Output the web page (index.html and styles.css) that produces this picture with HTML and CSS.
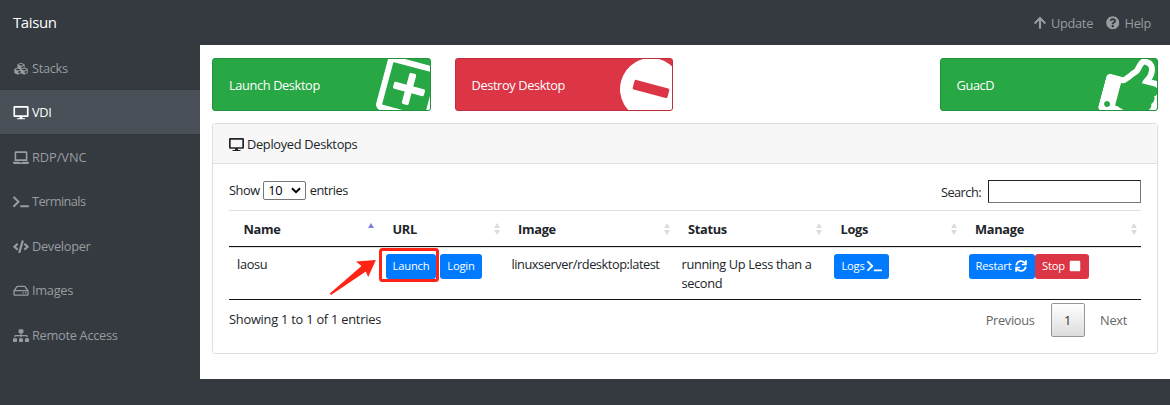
FILE: index.html
```html
<!DOCTYPE html>
<html lang="en">
<head>
<meta charset="utf-8">
<title>Taisun</title>
<link rel="stylesheet" href="styles.css">
</head>
<body>
<svg class="sprite" aria-hidden="true">
  <symbol id="cubes" viewBox="0 0 512 512"><path d="M488.6 250.2L392 214V105.5c0-15-9.3-28.4-23.4-33.7l-100-37.5c-8.1-3.1-17.1-3.1-25.3 0l-100 37.5c-14.1 5.3-23.4 18.7-23.4 33.7V214l-96.6 36.2C9.3 255.5 0 268.9 0 283.9V394c0 13.6 7.7 26.1 19.9 32.2l100 50c10.1 5.1 22.1 5.1 32.2 0l103.9-52 103.9 52c10.1 5.1 22.1 5.1 32.2 0l100-50c12.2-6.1 19.9-18.6 19.9-32.2V283.9c0-15-9.3-28.4-23.4-33.7zM358 214.8l-85 31.9v-68.2l85-37v73.3zM154 104.1l102-38.2 102 38.2v.6l-102 41.4-102-41.4v-.6zm84 291.1l-85 42.5v-79.1l85-38.8v75.4zm0-112l-102 41.4-102-41.4v-.6l102-38.2 102 38.2v.6zm240 112l-85 42.5v-79.1l85-38.8v75.4zm0-112l-102 41.4-102-41.4v-.6l102-38.2 102 38.2v.6z"/></symbol>
  <symbol id="desktop" viewBox="0 0 576 512"><path d="M528 0H48C21.5 0 0 21.5 0 48v320c0 26.5 21.5 48 48 48h192l-16 48h-72c-13.3 0-24 10.7-24 24s10.7 24 24 24h272c13.3 0 24-10.7 24-24s-10.7-24-24-24h-72l-16-48h192c26.5 0 48-21.5 48-48V48c0-26.5-21.5-48-48-48zm-16 352H64V64h448v288z"/></symbol>
  <symbol id="laptop" viewBox="0 0 640 512"><path d="M624 416H381.54c-.74 19.81-14.71 32-32.74 32H288c-18.69 0-33.02-17.47-32.77-32H16c-8.8 0-16 7.2-16 16v16c0 35.2 28.8 64 64 64h512c35.2 0 64-28.8 64-64v-16c0-8.8-7.2-16-16-16zM576 48c0-26.4-21.6-48-48-48H112C85.6 0 64 21.6 64 48v336h512V48zm-64 272H128V64h384v256z"/></symbol>
  <symbol id="terminal" viewBox="0 0 640 512"><path d="M257.981 272.971L63.638 467.314c-9.373 9.373-24.569 9.373-33.941 0L7.029 444.647c-9.357-9.357-9.375-24.522-.04-33.901L161.011 256 6.99 101.255c-9.335-9.379-9.317-24.544.04-33.901l22.667-22.667c9.373-9.373 24.569-9.373 33.941 0L257.981 239.03c9.373 9.372 9.373 24.568 0 33.941zM640 456v-32c0-13.255-10.745-24-24-24H312c-13.255 0-24 10.745-24 24v32c0 13.255 10.745 24 24 24h304c13.255 0 24-10.745 24-24z"/></symbol>
  <symbol id="code" viewBox="0 0 640 512"><path d="M278.9 511.5l-61-17.7c-6.4-1.8-10-8.5-8.2-14.9L346.2 8.7c1.8-6.4 8.5-10 14.9-8.2l61 17.7c6.4 1.8 10 8.5 8.2 14.9L293.8 503.3c-1.9 6.4-8.5 10.1-14.9 8.2zm-114-112.2l43.5-46.4c4.6-4.9 4.3-12.7-.8-17.2L117 256l90.6-79.7c5.1-4.5 5.5-12.3.8-17.2l-43.5-46.4c-4.5-4.8-12.1-5.1-17-.5L3.8 247.2c-5.1 4.7-5.1 12.8 0 17.5l144.1 135.1c4.9 4.6 12.5 4.4 17-.5zm327.2.6l144.1-135.1c5.1-4.7 5.1-12.8 0-17.5L492.1 112.1c-4.8-4.5-12.4-4.3-17 .5L431.6 159c-4.6 4.9-4.3 12.7.8 17.2L523 256l-90.6 79.7c-5.1 4.5-5.5 12.3-.8 17.2l43.5 46.4c4.5 4.9 12.1 5.1 17 .6z"/></symbol>
  <symbol id="hdd" viewBox="0 0 576 512"><path d="M567.403 235.642L462.323 84.589A48 48 0 0 0 422.919 64H153.081a48 48 0 0 0-39.404 20.589L8.597 235.642A48.001 48.001 0 0 0 0 263.054V400c0 26.51 21.49 48 48 48h480c26.51 0 48-21.49 48-48V263.054c0-9.801-3-19.366-8.597-27.412zM153.081 112h269.838l77.913 112H75.168l77.913-112zM528 400H48V272h480v128zm-32-64c0 17.673-14.327 32-32 32s-32-14.327-32-32 14.327-32 32-32 32 14.327 32 32zm-96 0c0 17.673-14.327 32-32 32s-32-14.327-32-32 14.327-32 32-32 32 14.327 32 32z"/></symbol>
  <symbol id="sitemap" viewBox="0 0 640 512"><path d="M128 352H32c-17.67 0-32 14.33-32 32v96c0 17.67 14.33 32 32 32h96c17.67 0 32-14.33 32-32v-96c0-17.67-14.33-32-32-32zm-24-80h192v48h48v-48h192v48h48v-57.59c0-21.17-17.23-38.41-38.41-38.41H344v-64h40c17.67 0 32-14.33 32-32V32c0-17.67-14.33-32-32-32H256c-17.67 0-32 14.33-32 32v96c0 17.67 14.33 32 32 32h40v64H94.41C73.23 224 56 241.23 56 262.41V320h48v-48zm264 80h-96c-17.67 0-32 14.33-32 32v96c0 17.67 14.33 32 32 32h96c17.67 0 32-14.33 32-32v-96c0-17.67-14.33-32-32-32zm240 0h-96c-17.67 0-32 14.33-32 32v96c0 17.67 14.33 32 32 32h96c17.67 0 32-14.33 32-32v-96c0-17.67-14.33-32-32-32z"/></symbol>
  <symbol id="arrow-up" viewBox="0 0 448 512"><path d="M34.9 289.5l-22.2-22.2c-9.4-9.4-9.4-24.6 0-33.9L207 39c9.4-9.4 24.6-9.4 33.9 0l194.3 194.3c9.4 9.4 9.4 24.6 0 33.9L413 289.4c-9.5 9.5-25 9.3-34.3-.4L264 168.6V456c0 13.3-10.7 24-24 24h-32c-13.3 0-24-10.7-24-24V168.6L69.2 289.1c-9.3 9.8-24.8 10-34.3.4z"/></symbol>
  <symbol id="question" viewBox="0 0 512 512"><path d="M504 256c0 136.997-111.043 248-248 248S8 392.997 8 256C8 119.083 119.043 8 256 8s248 111.083 248 248zM262.655 90c-54.497 0-89.255 22.957-116.549 63.758-3.536 5.286-2.353 12.415 2.715 16.258l34.699 26.31c5.205 3.947 12.621 3.008 16.665-2.122 17.864-22.658 30.113-35.797 57.303-35.797 20.429 0 45.698 13.148 45.698 32.958 0 14.976-12.363 22.667-32.534 33.976C247.128 238.528 216 254.941 216 296v4c0 6.627 5.373 12 12 12h56c6.627 0 12-5.373 12-12v-1.333c0-28.462 83.186-29.647 83.186-106.667 0-58.002-60.165-102-116.531-102zM256 338c-25.365 0-46 20.635-46 46 0 25.364 20.635 46 46 46s46-20.636 46-46c0-25.365-20.635-46-46-46z"/></symbol>
  <symbol id="sync" viewBox="0 0 512 512"><path fill="none" stroke="currentColor" stroke-width="76" d="M52 226A208 208 0 0 1 436 150M460 286A208 208 0 0 1 76 362"/><path d="M504 24v184c0 9-7 16-16 16H304c-9 0-16-7-16-16v-36c0-9 7-16 16-16h124V24c0-9 7-16 16-16h44c9 0 16 7 16 16zM8 488V304c0-9 7-16 16-16h184c9 0 16 7 16 16v36c0 9-7 16-16 16H84v132c0 9-7 16-16 16H24c-9 0-16-7-16-16z"/></symbol>
  <symbol id="square" viewBox="0 0 448 512"><rect y="32" width="448" height="448" rx="48"/></symbol>
  <symbol id="plus-square" viewBox="0 0 448 512"><path fill-rule="evenodd" d="M48 32h352a48 48 0 0 1 48 48v352a48 48 0 0 1-48 48H48a48 48 0 0 1-48-48V80a48 48 0 0 1 48-48zM54 80a6 6 0 0 0-6 6v340a6 6 0 0 0 6 6h340a6 6 0 0 0 6-6V86a6 6 0 0 0-6-6z"/><path d="M352 240v32c0 6.600-5.400 12-12 12h-88v88c0 6.600-5.400 12-12 12h-32c-6.600 0-12-5.400-12-12v-88h-88c-6.600 0-12-5.400-12-12v-32c0-6.600 5.400-12 12-12h88v-88c0-6.600 5.400-12 12-12h32c6.600 0 12 5.400 12 12v88h88c6.600 0 12 5.400 12 12z"/></symbol>
  <symbol id="minus-circle" viewBox="0 0 512 512"><path fill-rule="evenodd" d="M256 8a248 248 0 1 0 0 496 248 248 0 0 0 0-496zM124 296c-6.600 0-12-5.400-12-12v-56c0-6.600 5.400-12 12-12h264c6.600 0 12 5.400 12 12v56c0 6.600-5.400 12-12 12z"/></symbol>
  <symbol id="thumbs-up" viewBox="0 0 512 512"><path d="M466.27 286.69C475.04 271.84 480 256 480 236.85c0-44.015-37.218-85.58-85.82-85.58H357.7c4.92-12.81 8.85-28.13 8.85-46.54C366.55 31.936 328.86 0 271.28 0c-61.607 0-58.093 94.933-71.76 108.6-22.747 22.747-49.615 66.447-68.76 83.4H32c-17.673 0-32 14.327-32 32v240c0 17.673 14.327 32 32 32h64c14.893 0 27.408-10.174 30.978-23.95 44.509 1.001 75.06 39.94 177.802 39.94 7.22 0 15.22.01 22.22.01 77.117 0 111.986-39.423 112.94-95.33 13.319-18.425 20.299-43.122 17.34-66.99 9.854-18.452 13.664-40.343 8.99-62.99zm-61.75 53.83c12.56 21.13 1.26 49.41-13.94 57.57 7.7 48.78-17.608 65.9-53.12 65.9h-37.82c-71.639 0-118.029-37.82-171.64-37.82V240h10.92c28.36 0 67.98-70.89 94.54-97.46 28.36-28.36 18.91-75.63 37.82-94.54 47.27 0 47.27 32.98 47.27 56.73 0 39.17-28.36 56.72-28.36 94.54h103.99c21.11 0 37.73 18.91 37.82 37.82.09 18.9-12.82 37.81-22.27 37.81 13.489 14.555 16.371 45.236-5.21 65.62zM88 432c0 13.255-10.745 24-24 24s-24-10.745-24-24 10.745-24 24-24 24 10.745 24 24z"/></symbol>
</svg>

<header class="topbar">
  <a class="brand">Taisun</a>
  <nav class="toplinks">
    <a class="toplink"><svg class="icon w448"><use href="#arrow-up"/></svg><span>Update</span></a>
    <a class="toplink"><svg class="icon w512"><use href="#question"/></svg><span>Help</span></a>
  </nav>
</header>

<div class="shell">
  <nav class="sidebar">
    <a class="navitem"><svg class="icon"><use href="#cubes"/></svg><span>Stacks</span></a>
    <a class="navitem active"><svg class="icon"><use href="#desktop"/></svg><span>VDI</span></a>
    <a class="navitem wide"><svg class="icon"><use href="#laptop"/></svg><span>RDP/VNC</span></a>
    <a class="navitem tight"><svg class="icon"><use href="#terminal"/></svg><span>Terminals</span></a>
    <a class="navitem"><svg class="icon"><use href="#code"/></svg><span>Developer</span></a>
    <a class="navitem"><svg class="icon"><use href="#hdd"/></svg><span>Images</span></a>
    <a class="navitem"><svg class="icon"><use href="#sitemap"/></svg><span>Remote Access</span></a>
  </nav>

  <main class="content">
    <div class="tiles">
      <div class="tile success"><span>Launch Desktop</span><svg class="tile-icon"><use href="#plus-square"/></svg></div>
      <div class="tile danger"><span>Destroy Desktop</span><svg class="tile-icon"><use href="#minus-circle"/></svg></div>
      <div class="tile success last"><span>GuacD</span><svg class="tile-icon"><use href="#thumbs-up"/></svg></div>
    </div>

    <section class="card">
      <h2 class="card-header"><svg class="icon"><use href="#desktop"/></svg><span>Deployed Desktops</span></h2>
      <div class="card-body">
        <div class="controls">
          <div class="length">
            <span>Show</span>
            <span class="select">10<svg class="chevron" viewBox="0 0 10 7"><path d="M1 1.200l4 4 4-4"/></svg></span>
            <span>entries</span>
          </div>
          <label class="search"><span>Search:</span><input type="text"></label>
        </div>

        <div class="row head">
          <div class="th asc">Name</div>
          <div class="th">URL</div>
          <div class="th">Image</div>
          <div class="th">Status</div>
          <div class="th">Logs</div>
          <div class="th">Manage</div>
        </div>
        <div class="row data">
          <div class="td">laosu</div>
          <div class="td buttons spaced">
            <span class="marked"><button class="btn primary b-launch">Launch</button>
              <svg class="mark" viewBox="0 0 112 52"><rect x="51.500" y="3.500" width="57" height="31" rx="2"/><path d="M.8 47.600L32.500 20 27 15.500 46.900 14 39.200 31 36.800 25.500 2 49z"/></svg>
            </span>
            <button class="btn primary b-login">Login</button>
          </div>
          <div class="td tight">linuxserver/rdesktop:latest</div>
          <div class="td">running Up Less than a second</div>
          <div class="td buttons"><button class="btn primary b-logs">Logs<svg class="icon"><use href="#terminal"/></svg></button></div>
          <div class="td buttons"><button class="btn primary b-restart">Restart <svg class="icon"><use href="#sync"/></svg></button><button class="btn red b-stop">Stop <svg class="icon"><use href="#square"/></svg></button></div>
        </div>

        <div class="footer">
          <span class="info">Showing 1 to 1 of 1 entries</span>
          <div class="pager"><span class="page">Previous</span><span class="page current">1</span><span class="page">Next</span></div>
        </div>
      </div>
    </section>
  </main>
</div>
</body>
</html>
```
FILE: styles.css
```css
* { box-sizing: border-box; }

body {
  margin: 0;
  min-height: 405px;
  background: #343a40;
  color: #212529;
  font: 12.8px/19px "Open Sans", "Noto Sans", sans-serif;
  letter-spacing: -0.3px;
}

.sprite { display: none; }
.icon { height: 12.8px; width: 16px; fill: currentColor; flex: none; }
.w448 { width: 12px; height: 13.7px; }
.w512 { width: 13.5px; height: 13.5px; }

.topbar {
  height: 45px;
  padding: 0 19px 0 13px;
  display: flex;
  justify-content: space-between;
  align-items: center;
}
.brand { color: #fff; font-size: 15px; letter-spacing: -0.4px; }
.toplinks { display: flex; gap: 13px; padding-top: 1px; color: #999c9f; }
.toplink { display: flex; align-items: center; gap: 5px; }

.shell { display: flex; height: 334px; }
.sidebar { width: 200px; flex: none; color: #999c9f; }
.navitem {
  height: 44.5px;
  padding: 2px 13px 0;
  display: flex;
  align-items: center;
  gap: 3px;
}
.navitem .icon { height: 13.5px; }
.navitem.active { background: #495057; color: #fff; }
.navitem.wide { letter-spacing: -0.05px; }
.tight.navitem { letter-spacing: -0.6px; }
.tight.td { letter-spacing: -0.45px; }

.content { flex: 1; background: #fff; padding: 13px 12px 0; }

.tiles { display: grid; grid-template-columns: repeat(4, 1fr); gap: 24px; }
.tile {
  position: relative;
  height: 53px;
  padding: 1px 16px 0;
  display: flex;
  align-items: center;
  border: 1px solid;
  border-radius: 3px;
  color: #fff;
  letter-spacing: -0.38px;
  overflow: hidden;
}
.tile.success { background: #28a745; border-color: #23923d; }
.tile.danger { background: #dc3545; border-color: #c12e3d; }
.tile.last { grid-column: 4; }
.tile-icon {
  position: absolute;
  top: -2px;
  right: -11px;
  width: 64px;
  height: 64px;
  fill: #fff;
  transform: rotate(15deg);
}

.card { margin-top: 12px; height: 231px; border: 1px solid #dfdfdf; border-radius: 3px; }
.card-header {
  margin: 0;
  height: 40px;
  padding: 2px 16px 0;
  display: flex;
  align-items: center;
  gap: 3px;
  background: #f7f7f7;
  border-bottom: 1px solid #dfdfdf;
  font-size: 12.8px;
  font-weight: 400;
}
.card-header .icon { width: 15px; height: 13.3px; }
.card-body { padding: 16px; }

.controls { display: flex; justify-content: space-between; height: 30px; }
.length { display: flex; height: 20px; align-items: center; gap: 3.5px; letter-spacing: -0.45px; }
.select {
  width: 43px;
  height: 19px;
  padding: 0 4px;
  display: flex;
  align-items: center;
  justify-content: space-between;
  border: 1px solid #767676;
  border-radius: 2px;
  color: #000;
  letter-spacing: -0.2px;
}
.chevron { width: 10px; height: 7px; fill: none; stroke: #000; stroke-width: 2; }
.search { display: flex; height: 23px; align-items: center; gap: 7px; letter-spacing: -0.55px; }
.search span { padding-top: 1px; }
.search input { width: 153px; height: 23px; margin: 0; border: 1px solid #767676; border-top-color: #222; border-left-color: #222; }

.row { display: grid; grid-template-columns: 149px 125.5px 170px 152.5px 134.5px 180.5px; }
.head { height: 37px; border-top: 1px solid #dee2e6; border-bottom: 1px solid #111; }
.th { position: relative; padding: 9px 14.5px; font-weight: 700; }
.th::before, .th::after {
  content: "";
  position: absolute;
  right: 4px;
  border: 3.5px solid transparent;
}
.th::before { top: 12px; border-top: 0; border-bottom: 5px solid #dcdcdc; }
.th::after { top: 19px; border-bottom: 0; border-top: 5px solid #dcdcdc; }
.th.asc::before { border-bottom-color: #8080dd; }
.th.asc::after { display: none; }

.data { height: 53px; border-top: 1px solid #dee2e6; border-bottom: 1px solid #111; }
.td { padding: 7px 8px 0; letter-spacing: -0.35px; }
.buttons { display: flex; align-items: flex-start; padding-top: 6px; }
.spaced { gap: 4px; }
.btn {
  height: 25px;
  padding: 0 0 2px;
  display: flex;
  align-items: center;
  justify-content: center;
  border: 0;
  border-radius: 3px;
  color: #fff;
  font: 11.2px "Open Sans", "Noto Sans", sans-serif;
  letter-spacing: -0.2px;
  white-space: nowrap;
}
.primary { background: #007bff; }
.red { background: #dc3545; }
.btn .icon { height: 12px; width: 12px; margin-left: 4px; }
.b-launch { width: 50px; }
.b-login { width: 42px; }
.b-logs { width: 55px; }
.btn.b-logs .icon { width: 15px; margin-left: 2px; }
.b-restart { width: 66px; }
.b-stop { width: 54px; }

.marked { position: relative; }
.mark { position: absolute; left: -57px; top: -8px; width: 112px; height: 52px; fill: #ff2416; }
.mark rect { fill: none; stroke: #ff2416; stroke-width: 3; }

.footer { display: flex; justify-content: space-between; padding-top: 3px; }
.info { padding-top: 7px; letter-spacing: -0.22px; }
.pager { display: flex; color: #666; }
.page { height: 34px; padding: 0 14px 0 13.500px; line-height: 34px; }
.page.current {
  width: 34px;
  margin: 0 2px;
  padding: 0;
  text-align: center;
  line-height: 33px;
  color: #333;
  border: 1px solid #979797;
  border-radius: 2px;
  background: linear-gradient(#fff, #dcdcdc);
}
```
